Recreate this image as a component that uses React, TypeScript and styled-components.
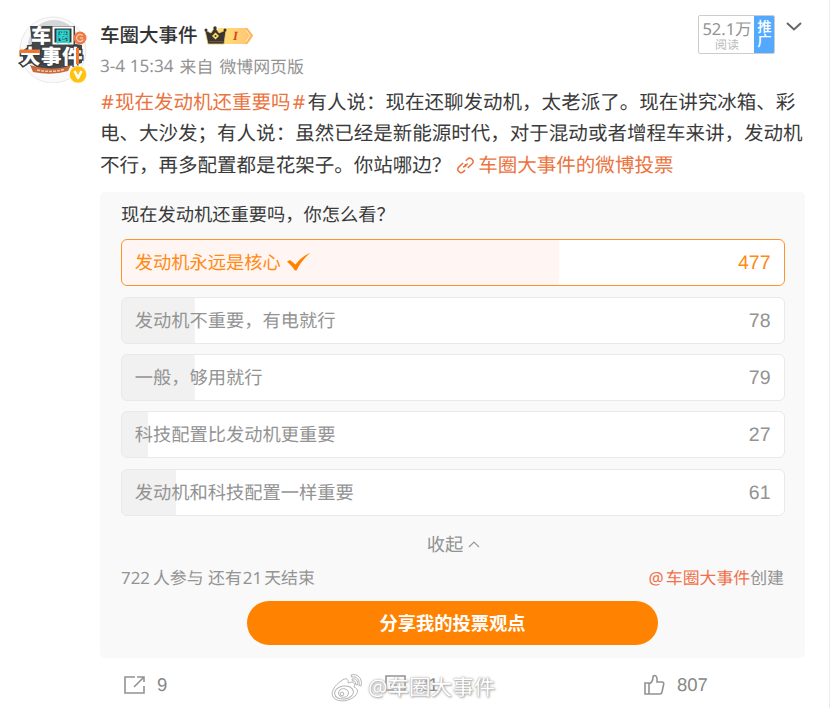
import React from "react";
import styled, { createGlobalStyle } from "styled-components";

const Global = createGlobalStyle`
  * { box-sizing: border-box; }
  body {
    margin: 0;
    background: #fff;
    font-family: "Noto Sans", "Noto Sans CJK SC", sans-serif;
    text-rendering: geometricPrecision;
    overflow: hidden;
  }
`;

const Post = styled.article`
  position: relative;
  width: 830px;
  height: 708px;
  padding: 18px 24px 0 18px;
  border-right: 1px solid #ececec;
  display: grid;
  grid-template-columns: 82px 705px;
  align-content: start;
`;

const Avatar = styled.svg`
  width: 72px;
  height: 68px;
  margin-top: -3px;
`;

const Header = styled.header`
  display: flex;
  justify-content: space-between;
  height: 66px;
`;

const Author = styled.div`
  display: flex;
  flex-direction: column;
`;

const NameRow = styled.div`
  display: flex;
  align-items: center;
  gap: 6px;
  height: 32px;
`;

const Name = styled.span`
  font-size: 19.5px;
  line-height: 32px;
  font-weight: 500;
  font-family: "Noto Sans CJK SC", sans-serif;
  color: #333;
`;

const CrownBadge = styled.svg`
  width: 51px;
  height: 20px;
  margin-top: 3px;
`;

const Meta = styled.span`
  display: flex;
  gap: 6px;
  font-size: 16.9px;
  line-height: 33px;
  color: #939393;
  white-space: pre;
`;

const Time = styled.span`
  font-size: 17.2px;
`;

const HeaderTools = styled.div`
  display: flex;
  gap: 10px;
  margin: -3px 2px 0 0;
`;

const Reads = styled.div`
  display: flex;
  width: 77px;
  height: 39px;
  border: 1px solid #ccc;
  border-radius: 2px;
  overflow: hidden;
`;

const ReadCount = styled.div`
  flex: 1;
  display: flex;
  flex-direction: column;
  align-items: center;
  font-size: 16.5px;
  line-height: 26px;
  color: #939393;
  white-space: nowrap;
`;

const ReadLabel = styled.div`
  font-size: 12px;
  line-height: 12px;
  margin-top: -3px;
  color: #bbb;
`;

const Promote = styled.div`
  width: 21px;
  background: #52a9ff;
  color: #fff;
  font-size: 14.5px;
  font-weight: 500;
  padding-top: 5px;
  margin: -1px;
  display: flex;
  flex-direction: column;
  align-items: center;
`;

const PromoteGlyph = styled.span`
  line-height: 14px;
  height: 14px;
`;

const Chevron = styled.svg`
  width: 18px;
  height: 12px;
  margin-top: 5px;
`;

const Body = styled.div`
  grid-column: 2;
  font-size: 19.53px;
  line-height: 31.3px;
  color: #3a3a3a;
  margin-top: 2px;
`;

const Line = styled.p`
  margin: 0;
  height: 31.3px;
  white-space: pre;
  display: flex;
`;

const Tag = styled.span`
  color: #eb7340;
`;

const Hash = styled.span<{ $width: number }>`
  display: inline-block;
  width: ${(p) => p.$width}px;
  text-align: center;
`;

const LinkIcon = styled.svg`
  width: 19px;
  height: 19px;
  margin: 7px 3px 0 5px;
`;

const Poll = styled.section`
  grid-column: 2;
  margin-top: 12px;
  height: 466px;
  padding: 8px 21px 0 21px;
  background: #f9f9f9;
  border-radius: 5px;
  display: flex;
  flex-direction: column;
`;

const PollTitle = styled.h2`
  margin: 0 0 9.5px;
  font-weight: 400;
  font-size: 18.25px;
  line-height: 30px;
  color: #3a3a3a;
  height: 30px;
`;

const Options = styled.div`
  display: flex;
  flex-direction: column;
  gap: 10.3px;
`;

const Option = styled.div<{ $share: number; $chosen?: boolean }>`
  width: 664px;
  height: 47px;
  padding: 1px 13.5px 0 12.7px;
  display: flex;
  align-items: center;
  border: 1px solid ${(p) => (p.$chosen ? "#ff9228" : "#e9e9e9")};
  border-radius: 6px;
  background: linear-gradient(
      ${(p) => (p.$chosen ? "#fff5f2, #fff5f2" : "#f1f1f1, #f1f1f1")}
    ) 0 0 / ${(p) => p.$share}% 100% no-repeat #fff;
  color: ${(p) => (p.$chosen ? "#ff8a14" : "#939393")};
  font-size: 18.25px;
  line-height: 26px;
`;

const Tick = styled.svg`
  width: 25px;
  height: 20px;
  margin-left: 5px;
  margin-top: -3px;
`;

const Votes = styled.span`
  margin-left: auto;
  font-family: "Liberation Sans", Arial, sans-serif;
  font-size: 19.5px;
`;

const Collapse = styled.div`
  height: 30px;
  margin-top: 13px;
  padding-left: 2px;
  display: flex;
  align-items: center;
  justify-content: center;
  gap: 5px;
  font-size: 18.25px;
  color: #939393;
`;

const CollapseIcon = styled.svg`
  width: 12px;
  height: 8px;
`;

const PollInfo = styled.div`
  display: flex;
  justify-content: space-between;
  font-size: 16.9px;
  line-height: 28px;
  height: 28px;
  margin-top: 5px;
  color: #939393;
`;

const InfoGroup = styled.span`
  display: flex;
  white-space: pre;
`;

const InfoNumber = styled.span`
  margin: 0 2px 0 1px;
`;

const Creator = styled.span`
  color: #f0704a;
`;

const At = styled.span`
  margin-right: 2px;
`;

const ShareButton = styled.button`
  align-self: center;
  width: 411px;
  height: 44px;
  margin-top: 9px;
  border: 0;
  border-radius: 22px;
  background: #ff8200;
  color: #fff;
  font: 700 18.25px/42px "Noto Sans CJK SC", sans-serif;
  padding: 0 0 2px;
`;

const Actions = styled.footer`
  grid-column: 2;
  height: 50px;
  padding: 5px 0 0 23px;
  display: grid;
  grid-template-columns: 261px 259px 1fr;
  align-items: center;
`;

const Action = styled.div`
  display: flex;
  align-items: center;
  gap: 11px;
  font: 18.5px/24px "Liberation Sans", Arial, sans-serif;
  color: #888;
`;

const ActionIcon = styled.svg`
  width: 23px;
  height: 22px;
  fill: none;
  stroke: #939393;
  stroke-width: 1.6;
`;

const Watermark = styled.div`
  position: absolute;
  left: 330px;
  top: 671px;
  display: flex;
  align-items: center;
  gap: 4px;
  font: 400 21.6px/34px "Noto Sans", "Noto Sans CJK SC", sans-serif;
  color: #fff;
  text-shadow: 0 0 1px #999, 1px 1px 2px #aaa, 0 0 3px #ccc;
`;

const WeiboMark = styled.svg`
  width: 34px;
  height: 30px;
`;

const options = [
  { label: "发动机永远是核心", votes: 477, share: 66, chosen: true },
  { label: "发动机不重要，有电就行", votes: 78, share: 11 },
  { label: "一般，够用就行", votes: 79, share: 11 },
  { label: "科技配置比发动机更重要", votes: 27, share: 4 },
  { label: "发动机和科技配置一样重要", votes: 61, share: 8.2 },
];

const AvatarArt = () => (
  <Avatar viewBox="18 14 72 68">
    <circle cx="53" cy="49" r="33" fill="#fafafa" stroke="#e8e8e8" />
    <circle cx="54" cy="45" r="26" fill="#d5d6d7" />
    <path d="M30 25H75V43L82 44V62L70 65L66 68H38L33 62L24 64L22 50L32 43Z" fill="#44484a" />
    <rect x="52.5" y="25.5" width="21" height="18" fill="#fff" />
    <rect x="54.500" y="27.5" width="17" height="14" fill="#28393c" />
    <circle cx="80" cy="37" r="6.500" fill="#ec7b45" />
    <path d="M82.500 34.500a3.500 3.500 0 1 0 .8 4M80 37h3" fill="none" stroke="#fbd9c4" strokeWidth="1.100" />
    <g fontFamily="Noto Sans CJK SC, sans-serif" fontWeight="900">
      <text x="31" y="42" fontSize="20" fill="#fff">车</text>
      <text x="55.500" y="40.500" fontSize="15" fill="#2fd5d2">圈</text>
      <g fontSize="20.500" fill="#fff" stroke="#3a3d3f" strokeWidth="3" paintOrder="stroke">
        <text x="20" y="62.500">大</text>
        <text x="41" y="62.500">事</text>
        <text x="62" y="62.500">件</text>
      </g>
    </g>
    <path d="M20 48.500H40V52H20ZM76 47H79V63H76Z" fill="#f07832" />
    <path d="M30 64Q53 71 71 64L68 70Q52 75 33 71Z" fill="#c66b3e" />
    <path d="M37 69Q52 72 64 68.500" stroke="#f3c7a8" strokeWidth="1.500" strokeDasharray="3 1" fill="none" />
    <circle cx="78" cy="73.500" r="8.700" fill="#ffc20d" stroke="#fff" strokeWidth=".8" />
    <path d="M74.500 70L78 77L81.500 70" fill="none" stroke="#fff" strokeWidth="2.600" strokeLinejoin="round" />
  </Avatar>
);

const Crown = () => (
  <CrownBadge viewBox="0 0 51 20">
    <defs>
      <linearGradient id="gold" x1="0" x2="1">
        <stop offset="0" stopColor="#ffe27a" />
        <stop offset="1" stopColor="#ffc173" />
      </linearGradient>
    </defs>
    <path d="M14 2H42Q44 2 45 4L49 9.500L45 16Q44 18 42 18H14Z" fill="url(#gold)" />
    <path d="M41 2H43L49 9.500L43 18H41L46 9.500Z" fill="#ffb35c" />
    <path d="M42 4L46 9.500L42 16" stroke="#fff0b8" fill="none" />
    <text x="29" y="14" fontFamily="Liberation Serif, serif" fontWeight="700" fontStyle="italic" fontSize="12.500" fill="#d9431e">I</text>
    <path d="M1 4L7 7L11 1L15 7L22 4L20 18H4Z" fill="#3b3532" stroke="#edc659" strokeWidth=".8" strokeLinejoin="round" />
    <circle cx="2" cy="4" r="1.500" fill="#3b3532" />
    <circle cx="11" cy="2" r="1.700" fill="#3b3532" />
    <circle cx="21" cy="4" r="1.500" fill="#3b3532" />
    <path d="M11.500 6.500L15 10L11.500 13.500L8 10Z" fill="#ffd860" />
    <circle cx="11.500" cy="10" r="1" fill="#3b3532" />
    <path d="M5 15.500H19" stroke="#6a5840" />
  </CrownBadge>
);

export default function App() {
  return (
    <>
      <Global />
      <Post>
        <AvatarArt />
        <Header>
          <Author>
            <NameRow>
              <Name>车圈大事件</Name>
              <Crown />
            </NameRow>
            <Meta>
              <Time>3-4 15:34</Time>
              <span>来自</span>
              <span>微博网页版</span>
            </Meta>
          </Author>
          <HeaderTools>
            <Reads>
              <ReadCount>
                <span>52.1万</span>
                <ReadLabel>阅读</ReadLabel>
              </ReadCount>
              <Promote>
                <PromoteGlyph>推</PromoteGlyph>
                <PromoteGlyph>广</PromoteGlyph>
              </Promote>
            </Reads>
            <Chevron viewBox="0 0 18 12">
              <path d="M2 3L9 9.500L16 3" fill="none" stroke="#666" strokeWidth="2" />
            </Chevron>
          </HeaderTools>
        </Header>
        <Body>
          <Line>
            <Tag><Hash $width={15}>#</Hash>现在发动机还重要吗<Hash $width={16.8}>#</Hash></Tag>
            有人说：现在还聊发动机，太老派了。现在讲究冰箱、彩
          </Line>
          <Line>电、大沙发；有人说：虽然已经是新能源时代，对于混动或者增程车来讲，发动机</Line>
          <Line>
            不行，再多配置都是花架子。你站哪边？
            <LinkIcon viewBox="0 0 19 19">
              <g transform="rotate(-43 9.500 9.500)" fill="none" stroke="#eb7340" strokeWidth="1.500">
                <path d="M9.500 6H3.800a3.300 3.300 0 0 0 0 6.600H6M6.500 9.300H9a3 3 0 0 0 1.500-1" />
                <path d="M9.500 12.800H15.200a3.300 3.300 0 0 0 0-6.600H13M12.500 9.600H10a3 3 0 0 0-1.500 1" />
              </g>
            </LinkIcon>
            <Tag>车圈大事件的微博投票</Tag>
          </Line>
        </Body>
        <Poll>
          <PollTitle>现在发动机还重要吗，你怎么看？</PollTitle>
          <Options>
            {options.map((o) => (
              <Option key={o.label} $share={o.share} $chosen={o.chosen}>
                {o.label}
                {o.chosen && (
                  <Tick viewBox="0 0 25 20">
                    <path d="M1 9.500L4 8L9.500 12.500Q15 5 24.500.5Q15 9 10.500 18.500H9Q5 13 1 9.500Z" fill="#ff8200" />
                  </Tick>
                )}
                <Votes>{o.votes}</Votes>
              </Option>
            ))}
          </Options>
          <Collapse>
            收起
            <CollapseIcon viewBox="0 0 12 8">
              <path d="M1 7L6 2L11 7" fill="none" stroke="#999" strokeWidth="1.200" />
            </CollapseIcon>
          </Collapse>
          <PollInfo>
            <InfoGroup>
              722<InfoNumber />人参与 还有<InfoNumber>21</InfoNumber>天结束
            </InfoGroup>
            <InfoGroup>
              <Creator><At>@</At>车圈大事件</Creator>创建
            </InfoGroup>
          </PollInfo>
          <ShareButton>分享我的投票观点</ShareButton>
        </Poll>
        <Actions>
          <Action>
            <ActionIcon viewBox="0 0 23 22">
              <path d="M12 3H2V19H21V12M14 3H21V8M21 3L11 13" />
            </ActionIcon>
            9
          </Action>
          <Action>
            <ActionIcon viewBox="0 0 23 22">
              <path d="M2 2H21V16H14L11.500 19L9 16H2ZM6 7H17M6 11H13" />
            </ActionIcon>
            21
          </Action>
          <Action>
            <ActionIcon viewBox="0 0 23 22">
              <path d="M2 9H6V20H2ZM6 10Q10 8 10 3Q10 1.500 12 1.500Q14.500 2 14 8H19Q21 8 20.700 10L19 18Q18.500 20 17 20H6" />
            </ActionIcon>
            807
          </Action>
        </Actions>
        <Watermark>
          <WeiboMark viewBox="0 0 34 30">
            <g fill="#fff" stroke="#b5b5b5" strokeWidth="1">
              <path d="M11 8C16 4 19 6 18 10C23 8 26 10 24 14C29 16 28 20 25 23C20 28 9 30 4 25C-1 20 5 12 11 8Z" />
              <ellipse cx="14" cy="19.500" rx="9.500" ry="6.500" transform="rotate(-8 14 19.500)" />
              <ellipse cx="13.500" cy="20" rx="5" ry="4.300" />
              <circle cx="12" cy="21" r="1.800" />
              <path d="M21 2C28 0 33 6 31 13L29 12.500C30 7 27 3 21.500 4ZM22 6C26 5 28.500 8 27.500 12L25.500 11.500C26 9 25 7.500 22.500 8Z" />
            </g>
          </WeiboMark>
          @车圈大事件
        </Watermark>
      </Post>
    </>
  );
}
